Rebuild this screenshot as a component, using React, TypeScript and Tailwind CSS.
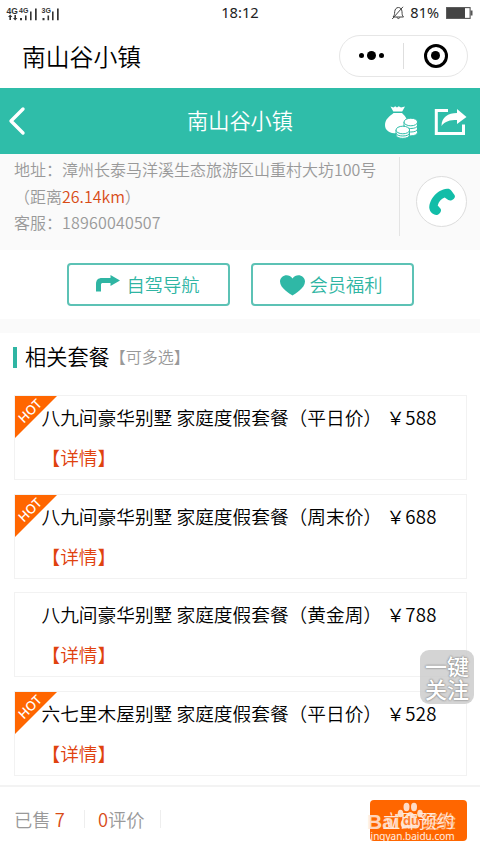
interface Package {
  id: number;
  title: string;
  price: number;
  hot: boolean;
}

const packages: Package[] = [
  { id: 1, title: '八九间豪华别墅 家庭度假套餐（平日价）', price: 588, hot: true },
  { id: 2, title: '八九间豪华别墅 家庭度假套餐（周末价）', price: 688, hot: true },
  { id: 3, title: '八九间豪华别墅 家庭度假套餐（黄金周）', price: 788, hot: false },
  { id: 4, title: '六七里木屋别墅 家庭度假套餐（平日价）', price: 528, hot: true },
];

const StatusBar = () => (
  <div className="flex h-[25px] items-center font-normal">
    <div className="flex w-[160px] pl-[6px]">
      <svg width="60" height="16" viewBox="0 0 60 16" fill="#333">
        <g fontFamily="Liberation Sans" fontWeight="bold">
          <text x="0.5" y="9" fontSize="8.5">4G</text>
          <text x="13" y="8" fontSize="7">4G</text>
          <text x="35.5" y="8" fontSize="7">3G</text>
        </g>
        <path d="M2 12l2.2-2.4L6.400 12H5v3H3.400v-3zM7 13l2.200 2.400L11.400 13H10v-3H8.400v3z" />
        <path d="M14 13h2v2.200h-2zM19 10.500h1.600v4.700H19zM24 6.500h1.600v8.700H24zM29 3.500h1.700v11.700H29z" />
        <path d="M36.500 13h2v2.200h-2zM41.500 10.500h1.600v4.700h-1.600zM46 6.500h1.600v8.700H46zM51 3.500h1.700v11.700H51z" />
      </svg>
    </div>
    <div className="w-[160px] text-center font-['Noto_Sans'] text-[14.700px] leading-none text-[#222]">18:12</div>
    <div className="flex w-[160px] items-center justify-end pr-[7px]">
      <svg className="mr-[5px]" width="14" height="14" viewBox="0 0 14 14" fill="none" stroke="#444" strokeWidth="1">
        <path d="M2 11h10.500c-1.500-1.500-1.300-2.700-1.500-5.300C10.800 3.300 9.500 1.500 7.400 1.500S3.900 3.300 3.700 5.700C3.500 8.300 3.500 9.500 2 11zM6 11.300c.3 1.700 2.500 1.700 2.800 0M1.200 13L12 .8" />
      </svg>
      <span className="mr-[7px] font-['Noto_Sans'] text-[14.500px] leading-none text-[#222]">81%</span>
      <svg width="27" height="12" viewBox="0 0 27 12">
        <rect x=".6" y=".6" width="23.500" height="10.800" fill="#fff" stroke="#555" strokeWidth="1.100" />
        <rect x="1" y="1" width="18" height="10" fill="#444" />
        <rect x="24.500" y="3.500" width="2" height="5" fill="#555" />
      </svg>
    </div>
  </div>
);

const TitleBar = () => (
  <div className="flex h-[63px] items-center justify-between pr-3 pl-[22px]">
    <h1 className="mt-[-2px] text-[23.800px] leading-none text-black">南山谷小镇</h1>
    <div className="mt-[-2px] flex h-[42px] w-[129px] items-center rounded-full border border-[#e6e6e6]">
      <div className="flex flex-1 items-center justify-center gap-[3px]">
        <i className="size-[5px] rounded-full bg-black" />
        <i className="size-[9px] rounded-full bg-black" />
        <i className="size-[5px] rounded-full bg-black" />
      </div>
      <div className="h-[26px] w-px bg-[#dedede]" />
      <div className="flex flex-1 items-center justify-center">
        <div className="flex size-6 items-center justify-center rounded-full border-[3px] border-black">
          <i className="size-[9px] rounded-full bg-black" />
        </div>
      </div>
    </div>
  </div>
);

const NavBar = () => (
  <div className="grid h-[66px] grid-cols-[100px_1fr_100px] items-center bg-[#2fbda9] text-white">
    <svg className="ml-[8px]" width="18" height="30" viewBox="0 0 18 30" fill="none" stroke="#fff" strokeWidth="3.400" strokeLinecap="round" strokeLinejoin="round">
      <path d="M15 3L3 15l12 12" />
    </svg>
    <h2 className="mt-[-2px] text-center text-[21.200px] leading-none">南山谷小镇</h2>
    <div className="flex items-center">
      {/* Money bag */}
      <svg className="mt-[2px] ml-[4px]" width="35" height="34" viewBox="0 0 35 34" fill="#fff">
        <path d="M6.500 1.500l3 1 1.700-1.300L13 2.500l1.700-1.300L17 2.500l4-1-2.800 5H9.300z" />
        <path d="M9.500 8h8.500c3 3 6 6 6 12.500 0 5-4.500 8-11 8C5.500 28.500 1 25.500 1 20 1 14 6 11 9.500 8z" />
        <g stroke="#2fbda9" strokeWidth="1">
          <path d="M20 17v10.500c0 4.500 13.500 4.500 13.500 0V17z" />
          <path d="M20 20.500c0 4 13.500 4 13.500 0M20 24c0 4 13.500 4 13.500 0" fill="none" />
          <ellipse cx="26.800" cy="17" rx="6.800" ry="3.800" />
          <path d="M12 25v5c0 4.500 13.500 4.500 13.500 0v-5z" />
          <path d="M12 28c0 4 13.500 4 13.500 0" fill="none" />
          <ellipse cx="18.800" cy="25" rx="6.800" ry="3.800" />
        </g>
      </svg>
      {/* Share */}
      <svg className="ml-[15px]" width="33" height="30" viewBox="0 0 33 30">
        <path d="M14 4.500H2.300v23h27.200v-9" fill="none" stroke="#fff" strokeWidth="3" />
        <path d="M7.500 20c0-9 6.500-13 15.500-13V3l9.500 8-9.500 7v-4c-7 0-12 1-15.500 6z" fill="#fff" />
      </svg>
    </div>
  </div>
);

const HotelInfo = () => (
  <div className="flex h-[96px] bg-[#fafafa]">
    <div className="mt-[3px] h-[79px] w-[400px] border-r border-[#e4e4e4] pl-[14px] text-[16px] whitespace-nowrap text-[#999]">
      <div className="mt-[-1px] leading-[26.500px]">
        <p>地址：漳州长泰马洋溪生态旅游区山重村大坊100号</p>
        <p>（距离<span className="text-[#d84b16]">26.14km</span>）</p>
        <p>客服：<span className="tracking-[0.2px]">18960040507</span></p>
      </div>
    </div>
    <div className="mt-[22px] ml-4 flex size-[51px] items-center justify-center rounded-full border border-[#ddd] bg-white">
      <svg width="28" height="28" viewBox="0 0 28 28" fill="#12bda8">
        <path d="M1.500 21C.3 12.500 9 1.500 19 .7c2-.2 3 .3 4.200 1.900l3.300 4.500c.8 1.300.5 2.600-.6 3.700-1.800 1.700-3.700 2.200-5.600 1.300l-3.600-2.500c-3.500 1.300-6 4-7 7.800l2.700 3c1.300 1.400.6 3.500-1.200 5.400-1.200 1.300-3.300 1.700-4.900.8C3.500 25 2 23.500 1.500 21z" />
      </svg>
    </div>
  </div>
);

const Actions = () => (
  <div className="flex h-[69px] justify-center gap-[21px] pt-[13px] text-[18.300px] leading-none text-[#2fb5a3]">
    <button className="flex h-[43px] w-[163px] items-center rounded-[4px] border-2 border-[#5cc2b5] pl-[27px]">
      <svg className="mt-[-3px]" width="24" height="17" viewBox="0 0 24 17" fill="#2fb5a3">
        <path d="M0 16.500V9c0-4 2-6 6-6h8.500V0L24 5.500 14.500 11V8H7C5.500 8 5 8.500 5 10v6.500z" />
      </svg>
      <span className="ml-[7px]">自驾导航</span>
    </button>
    <button className="flex h-[43px] w-[163px] items-center rounded-[4px] border-2 border-[#5cc2b5] pl-[27px]">
      <svg className="mt-[2px]" width="25" height="21" viewBox="0 0 25 21" fill="#2fb8a6">
        <path d="M12.500 20.500C10.500 19 0 13.500 0 6.500 0 .5 8.500-2.500 12.500 3.500 16.500-2.500 25 .5 25 6.500c0 7-10.500 12.500-12.500 14z" />
      </svg>
      <span className="ml-[5px]">会员福利</span>
    </button>
  </div>
);

const HotBadge = () => (
  <svg className="absolute top-0 left-0" width="42" height="42" viewBox="0 0 42 42">
    <path d="M0 0h42L0 42z" fill="#ff6600" />
    <text x="15" y="19.500" fill="#fff" fontFamily="Noto Sans" fontSize="13" fontWeight="500" textAnchor="middle" transform="rotate(-45 15 15)">HOT</text>
  </svg>
);

const PackageCard = ({ item }: { item: Package }) => (
  <div className="relative h-[85px] w-[453px] shrink-0 border border-[#f2f2f2] pt-[10px] pl-[27px] whitespace-nowrap">
    {item.hot && <HotBadge />}
    <p className="relative text-[18.700px] leading-[22px] text-black">
      {item.title} <span className="tracking-[0.300px]">￥{item.price}</span>
    </p>
    <p className="mt-[18px] text-[18.700px] leading-[22px] text-[#e0420e]">【详情】</p>
  </div>
);

const BookButton = () => (
  <button className="relative h-[41px] w-[97px] rounded-[4px] bg-[#ff6600] text-center text-[18px] leading-[39px] text-white/85">
    立即预约
    {/* Baidu Jingyan watermark */}
    <span className="absolute top-[10px] left-[-3px] flex items-center font-['Liberation_Sans','Noto_Sans_CJK_SC',sans-serif] text-[21px] leading-[24px] font-bold whitespace-nowrap text-[#ffe9dc]/85">
      Bai
    </span>
    <svg className="absolute top-[2px] left-[27px]" width="27" height="27" viewBox="0 0 27 27" fill="#ffe9dc" fillOpacity=".9">
      <ellipse cx="3.500" cy="11.500" rx="2.800" ry="3.800" />
      <ellipse cx="9.500" cy="5" rx="3" ry="4.200" />
      <ellipse cx="17" cy="5" rx="3" ry="4.200" />
      <ellipse cx="23" cy="11.500" rx="2.800" ry="3.800" />
      <path d="M13.300 10c3 0 4.500 4 7 6.500 5 5 2 10.500-2 10-3-.4-7-.4-10 0-4 .5-7-5-2-10 2.500-2.500 4-6.500 7-6.500z" />
    </svg>
    <span className="absolute top-[13px] left-[33px] font-['Liberation_Sans'] text-[13px] leading-[16px] font-bold text-[#ff6600]/80">du</span>
    <span className="absolute top-[10px] left-[52px] text-[17px] leading-[22px] font-medium whitespace-nowrap text-[#ffe9dc]/60">经验</span>
    <span className="absolute top-[29px] left-[-2px] font-['Noto_Sans'] text-[10px] leading-[14px] font-normal whitespace-nowrap text-white/90">jingyan.baidu.com</span>
  </button>
);

const Footer = () => (
  <footer className="flex h-[68px] items-center border-t-2 border-[#f3f3f3] bg-white pr-[13px] pl-[14px] text-[18.300px] leading-none text-[#999]">
    <div className="mt-[-2px] w-[71px] border-r border-[#eee] whitespace-nowrap">
      已售 <span className="text-[#d84b16]">7</span>
    </div>
    <div className="mt-[-2px] w-[76px] border-r border-[#eee] pl-[13px] whitespace-nowrap">
      <span className="text-[#d84b16]">0</span>评价
    </div>
    <div className="ml-auto">
      <BookButton />
    </div>
  </footer>
);

export default function App() {
  return (
    <div className="relative flex h-[853px] w-[480px] flex-col overflow-hidden bg-white font-['Noto_Sans_CJK_SC',sans-serif] font-[350]">
      <StatusBar />
      <TitleBar />
      <NavBar />
      <HotelInfo />
      <Actions />
      <div className="h-[14px] bg-[#fafafa]" />
      <section className="flex h-[452px] flex-col">
        <div className="flex h-[62px] items-center pb-[14px] pl-[13px]">
          <i className="h-[21px] w-1 bg-[#2fb5a3]" />
          <h3 className="mt-[-2px] ml-2 text-[21.200px] leading-none text-black">相关套餐</h3>
          <span className="mt-[-3px] text-[16px] leading-none text-[#999]">【可多选】</span>
        </div>
        <div className="flex flex-col gap-[13.700px] pl-[13.500px]">
          {packages.map(item => (
            <PackageCard key={item.id} item={item} />
          ))}
        </div>
      </section>
      <Footer />

      {/* Floating follow button */}
      <div className="absolute top-[650px] left-[420px] flex size-[54px] flex-col items-center justify-center rounded-[9px] bg-[#cccccc]/85 text-[22px] leading-[23px] font-medium text-white [text-shadow:0_0_2px_#888,0_0_2px_#888]">
        <span>一键</span>
        <span>关注</span>
      </div>
    </div>
  );
}
